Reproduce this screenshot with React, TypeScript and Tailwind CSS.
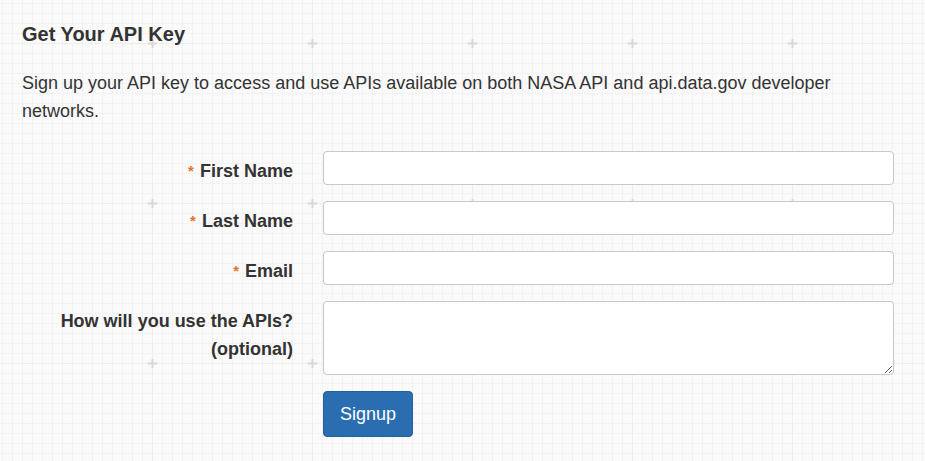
import React from "react";

const GridBackground = () => (
  <svg className="absolute inset-0 h-full w-full" aria-hidden="true">
    <defs>
      <pattern id="fine" x="2" y="3" width="10" height="10" patternUnits="userSpaceOnUse">
        <path d="M0.5 0V10M0 0.5H10" stroke="#f2f2f2" strokeWidth="1" fill="none" />
      </pattern>
      <pattern id="major" x="72" y="123" width="160" height="160" patternUnits="userSpaceOnUse">
        <path d="M80.5 0V160M0 80.5H160" stroke="#ededed" strokeWidth="1" fill="none" />
        <path d="M76 80.5H85M80.5 76V85" stroke="#d8d8d8" strokeWidth="2" fill="none" />
      </pattern>
    </defs>
    <rect width="100%" height="100%" fill="#fafafa" />
    <rect width="100%" height="100%" fill="url(#fine)" />
    <rect width="100%" height="100%" fill="url(#major)" />
  </svg>
);

const Label = ({ text, required, sub }: { text: string; required?: boolean; sub?: string }) => (
  <label className="pt-[6px] text-right text-[18px] font-bold leading-[28px] text-[#333]">
    {required && <span className="mr-[6px] align-[1px] text-[15px] text-[#e8742b]">*</span>}
    {text}
    {sub && (
      <>
        <br />
        {sub}
      </>
    )}
  </label>
);

const inputCls =
  "h-[34px] w-full rounded-[4px] border border-[#c8c8c8] bg-white px-3 text-[18px] text-[#333] outline-none";

export default function App() {
  return (
    <div className="relative min-h-screen font-['Liberation_Sans',Arial,sans-serif] text-[#333]">
      <GridBackground />
      <div className="relative px-[22px] pt-[22px]">
        <h2 className="text-[20px] font-bold leading-[24px]">Get Your API Key</h2>
        <p className="mt-[23px] w-[872px] text-[18px] leading-[28px]">
          Sign up your API key to access and use APIs available on both NASA API and api.data.gov developer
          networks.
        </p>
        <form className="mt-[26px] grid w-[872px] grid-cols-[271px_1fr] gap-x-[30px] gap-y-[16px]">
          <Label text="First Name" required />
          <input className={inputCls} />
          <Label text="Last Name" required />
          <input className={inputCls} />
          <Label text="Email" required />
          <input className={inputCls} />
          <Label text="How will you use the APIs?" sub="(optional)" />
          <textarea className="h-[74px] w-full rounded-[4px] border border-[#c8c8c8] bg-white px-3 py-1 text-[18px] outline-none" />
          <div />
          <div>
            <button
              type="button"
              className="h-[46px] w-[90px] rounded-[4px] border border-[#235f9b] bg-[#2a6db0] text-[18px] text-white"
            >
              Signup
            </button>
          </div>
        </form>
      </div>
    </div>
  );
}
